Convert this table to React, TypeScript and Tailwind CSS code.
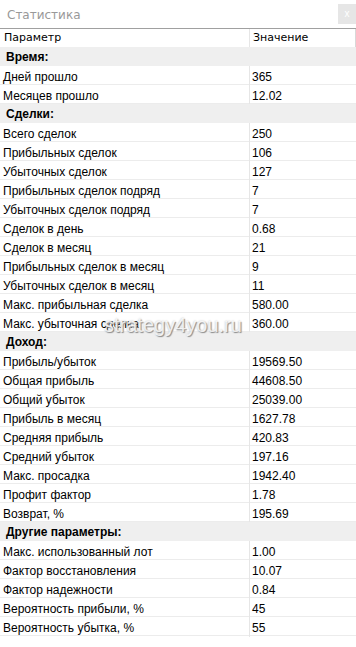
import React from 'react'

type Row = { label: string; value?: string; section?: boolean }

const ROWS: Row[] = [
  { label: 'Время:', section: true },
  { label: 'Дней прошло', value: '365' },
  { label: 'Месяцев прошло', value: '12.02' },
  { label: 'Сделки:', section: true },
  { label: 'Всего сделок', value: '250' },
  { label: 'Прибыльных сделок', value: '106' },
  { label: 'Убыточных сделок', value: '127' },
  { label: 'Прибыльных сделок подряд', value: '7' },
  { label: 'Убыточных сделок подряд', value: '7' },
  { label: 'Сделок в день', value: '0.68' },
  { label: 'Сделок в месяц', value: '21' },
  { label: 'Прибыльных сделок в месяц', value: '9' },
  { label: 'Убыточных сделок в месяц', value: '11' },
  { label: 'Макс. прибыльная сделка', value: '580.00' },
  { label: 'Макс. убыточная сделка', value: '360.00' },
  { label: 'Доход:', section: true },
  { label: 'Прибыль/убыток', value: '19569.50' },
  { label: 'Общая прибыль', value: '44608.50' },
  { label: 'Общий убыток', value: '25039.00' },
  { label: 'Прибыль в месяц', value: '1627.78' },
  { label: 'Средняя прибыль', value: '420.83' },
  { label: 'Средний убыток', value: '197.16' },
  { label: 'Макс. просадка', value: '1942.40' },
  { label: 'Профит фактор', value: '1.78' },
  { label: 'Возврат, %', value: '195.69' },
  { label: 'Другие параметры:', section: true },
  { label: 'Макс. использованный лот', value: '1.00' },
  { label: 'Фактор восстановления', value: '10.07' },
  { label: 'Фактор надежности', value: '0.84' },
  { label: 'Вероятность прибыли, %', value: '45' },
  { label: 'Вероятность убытка, %', value: '55' },
]

function StatRow({ row }: { row: Row }) {
  if (row.section) {
    return (
      <div className="flex h-[19px] items-center bg-[#efefef] pl-[6px] pt-[1px] text-[12px] font-bold text-black">
        {row.label}
      </div>
    )
  }
  return (
    <div className="grid h-[19px] grid-cols-[249px_1fr] border-b border-[#ececec] text-[12px] text-black">
      <span className="flex items-center pl-[3px] pt-[2px]">{row.label}</span>
      <span className="flex items-center border-l border-[#e6e6e6] pl-[2px] pt-[2px]">{row.value}</span>
    </div>
  )
}

export default function App() {
  return (
    <div className="relative h-[647px] w-[356px] overflow-hidden bg-white font-['Liberation_Sans',Arial,sans-serif]">
      <div className="flex h-[29px] items-center justify-between border-b border-[#a0a0a0]">
        <span className="pl-[7px] pt-[1px] font-['DejaVu_Sans',sans-serif] text-[12px] text-[#999999]">
          Статистика
        </span>
        <span className="flex h-[20px] w-[18px] items-center justify-center bg-[#e6e6e6] text-[10px] leading-none text-white">
          x
        </span>
      </div>
      <div className="grid h-[18px] grid-cols-[249px_1fr] border-r border-[#d8d8d8] font-['DejaVu_Sans',sans-serif] text-[11px] text-black">
        <span className="flex items-center pl-[4px] pt-[1px]">Параметр</span>
        <span className="flex items-center border-l border-[#e6e6e6] pl-[3px] pt-[1px]">Значение</span>
      </div>
      <div className="flex flex-col">
        {ROWS.map((row, i) => (
          <StatRow key={i} row={row} />
        ))}
      </div>
      <div className="pointer-events-none absolute left-[104px] top-[315px] text-[20px] leading-none text-white/80 [text-shadow:1px_1px_1px_#8a8a8a,0_0_2px_#bdbdbd]">
        strategy4you.ru
      </div>
    </div>
  )
}
